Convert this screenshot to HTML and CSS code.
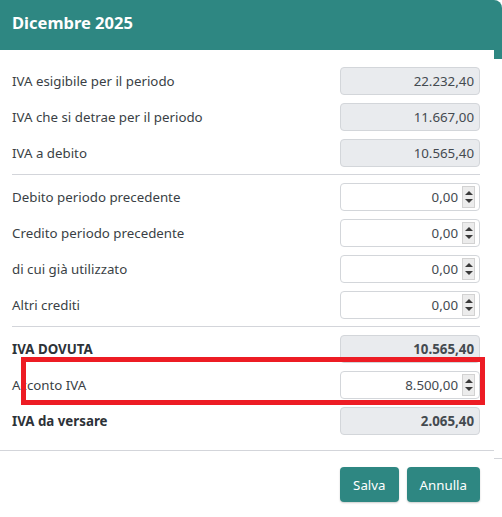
FILE: index.html
```html
<!DOCTYPE html>
<html lang="it">
<head>
<meta charset="utf-8">
<link rel="stylesheet" href="styles.css">
</head>
<body>
<div class="frame">
  <div class="panel">
    <div class="header"><h1 class="title">Dicembre 2025</h1></div>
    <div class="body">
      <div class="group">
        <div class="row"><span class="label">IVA esigibile per il periodo</span><div class="box ro">22.232,40</div></div>
        <div class="row"><span class="label">IVA che si detrae per il periodo</span><div class="box ro">11.667,00</div></div>
        <div class="row"><span class="label">IVA a debito</span><div class="box ro">10.565,40</div></div>
      </div>
      <div class="sep"></div>
      <div class="group">
        <div class="row"><span class="label">Debito periodo precedente</span><div class="box num"><span class="val">0,00</span><span class="spin"><i class="up"></i><i class="down"></i></span></div></div>
        <div class="row"><span class="label">Credito periodo precedente</span><div class="box num"><span class="val">0,00</span><span class="spin"><i class="up"></i><i class="down"></i></span></div></div>
        <div class="row"><span class="label">di cui già utilizzato</span><div class="box num"><span class="val">0,00</span><span class="spin"><i class="up"></i><i class="down"></i></span></div></div>
        <div class="row"><span class="label">Altri crediti</span><div class="box num"><span class="val">0,00</span><span class="spin"><i class="up"></i><i class="down"></i></span></div></div>
      </div>
      <div class="sep"></div>
      <div class="group">
        <div class="row"><span class="label bold">IVA DOVUTA</span><div class="box ro bold">10.565,40</div></div>
        <div class="row hl"><span class="label">Acconto IVA</span><div class="box num"><span class="val">8.500,00</span><span class="spin"><i class="up"></i><i class="down"></i></span></div><span class="mark"></span></div>
        <div class="row"><span class="label bold">IVA da versare</span><div class="box ro bold">2.065,40</div></div>
      </div>
    </div>
    <div class="footer">
      <button class="btn">Salva</button>
      <button class="btn">Annulla</button>
    </div>
  </div>
  <div class="strip">
    <div class="strip-top"></div>
    <div class="strip-line"></div>
  </div>
</div>
</body>
</html>
```
FILE: styles.css
```css
html, body {
  margin: 0;
  padding: 0;
  background: #ffffff;
}
body {
  width: 502px;
  height: 517px;
  overflow: hidden;
  font-family: "Noto Sans", "Open Sans", sans-serif;
  font-size: 13.3px;
  color: #333a40;
}
.frame {
  display: flex;
  width: 502px;
  height: 517px;
}
.panel {
  width: 494px;
  flex: none;
  background: #fff;
}
.header {
  background: #2e8782;
  height: 50px;
  display: flex;
  align-items: center;
  padding: 0 12px;
  box-sizing: border-box;
}
.title {
  margin: 0;
  color: #fff;
  font-size: 16.5px;
  font-weight: 700;
  padding-bottom: 6px;
}
.body {
  padding: 17px 14px 0 12px;
}
.group {
  display: flex;
  flex-direction: column;
  gap: 8px;
}
.sep {
  height: 1px;
  background: #d3d5da;
  margin: 7px 0 8px;
}
.row {
  display: flex;
  justify-content: space-between;
  align-items: center;
  height: 28px;
  position: relative;
}
.label {
  color: #3a3f45;
}
.bold {
  font-weight: 700;
  color: #2d3238;
}
.box {
  width: 140px;
  height: 28px;
  box-sizing: border-box;
  border: 1px solid #d3d6da;
  border-radius: 4px;
  display: flex;
  align-items: center;
  justify-content: flex-end;
  padding-right: 5px;
  color: #444a50;
}
.ro {
  background: #e9ebee;
}
.num {
  background: #fff;
  padding-right: 4px;
}
.val {
  margin-right: 4px;
}
.spin {
  width: 13px;
  height: 22px;
  box-sizing: border-box;
  background: #ececec;
  border: 1px solid #d2d2d2;
  display: flex;
  flex-direction: column;
  align-items: center;
  justify-content: space-around;
  padding: 2px 0;
}
.spin i {
  width: 0;
  height: 0;
  border-left: 4px solid transparent;
  border-right: 4px solid transparent;
}
.spin .up {
  border-bottom: 4px solid #3a3a3a;
}
.spin .down {
  border-top: 4px solid #3a3a3a;
}
.hl .mark {
  position: absolute;
  left: 9px;
  right: -5px;
  top: -14px;
  bottom: -6px;
  border: 5px solid #ed1c24;
}
.footer {
  margin-top: 15px;
  border-top: 1px solid #d3d5da;
  padding: 16px 14px 0 0;
  display: flex;
  justify-content: flex-end;
  gap: 8px;
}
.btn {
  height: 35px;
  background: #2e8782;
  color: #fff;
  border: none;
  border-radius: 4px;
  font-family: inherit;
  font-size: 13.3px;
  padding: 0 13px;
  box-shadow: 0 1px 2px rgba(0,0,0,0.2);
}
.strip {
  width: 8px;
  flex: none;
  display: flex;
  flex-direction: column;
}
.strip-top {
  height: 59px;
  background: #2e8782;
  border-top-right-radius: 8px;
}
.strip-line {
  margin-top: 399px;
  height: 1px;
  background: #d3d5da;
}
```
